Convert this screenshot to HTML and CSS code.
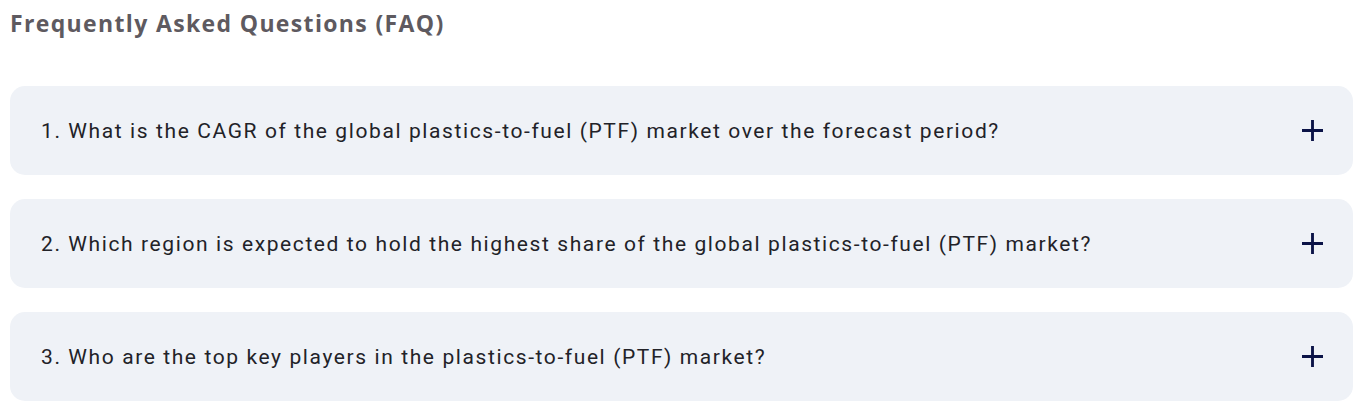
FILE: index.html
```html
<!DOCTYPE html>
<html lang="en">
<head>
<meta charset="utf-8">
<link rel="stylesheet" href="styles.css">
<title>FAQ</title>
</head>
<body>
<section class="faq">
  <h2 class="faq-title">Frequently Asked Questions (FAQ)</h2>
  <div class="faq-list">
    <div class="faq-item">
      <span class="faq-q">1. What is the CAGR of the global plastics-to-fuel (PTF) market over the forecast period?</span>
      <svg class="faq-icon" viewBox="0 0 22 22" aria-hidden="true"><path d="M11 0v22M0 11h22"/></svg>
    </div>
    <div class="faq-item">
      <span class="faq-q">2. Which region is expected to hold the highest share of the global plastics-to-fuel (PTF) market?</span>
      <svg class="faq-icon" viewBox="0 0 22 22" aria-hidden="true"><path d="M11 0v22M0 11h22"/></svg>
    </div>
    <div class="faq-item">
      <span class="faq-q">3. Who are the top key players in the plastics-to-fuel (PTF) market?</span>
      <svg class="faq-icon" viewBox="0 0 22 22" aria-hidden="true"><path d="M11 0v22M0 11h22"/></svg>
    </div>
  </div>
</section>
</body>
</html>
```
FILE: styles.css
```css
html, body {
  margin: 0;
  padding: 0;
  background: #ffffff;
}
.faq {
  padding: 7px 13px 0 10px;
}
.faq-title {
  margin: 0;
  font-family: "Open Sans", sans-serif;
  font-weight: 700;
  font-size: 23px;
  line-height: 32px;
  letter-spacing: 1.35px;
  color: #5e5a60;
}
.faq-list {
  margin-top: 47px;
  display: flex;
  flex-direction: column;
  gap: 24px;
}
.faq-item {
  display: flex;
  align-items: center;
  justify-content: space-between;
  height: 89px;
  padding: 0 30px 0 31px;
  background: #eff2f7;
  border-radius: 15px;
  box-sizing: border-box;
}
.faq-q {
  font-family: Roboto, sans-serif;
  font-size: 21px;
  letter-spacing: 1.6px;
  color: #222228;
}
.faq-icon {
  width: 21px;
  height: 21px;
  flex: none;
  stroke: #0b1347;
  stroke-width: 3;
  fill: none;
}
```
